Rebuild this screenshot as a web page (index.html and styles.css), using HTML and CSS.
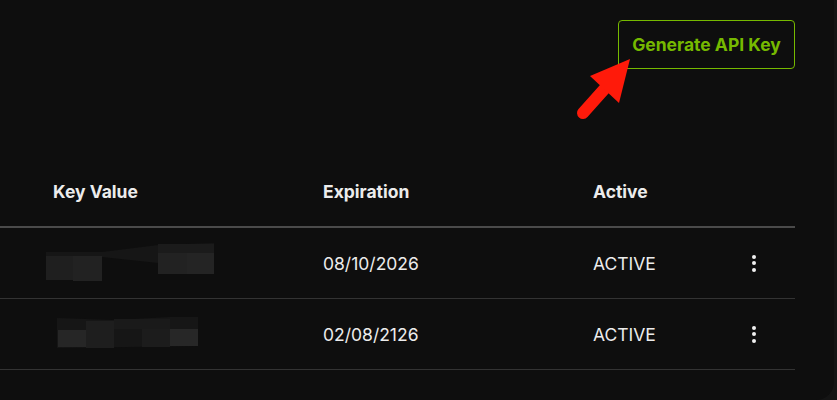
FILE: index.html
```html
<!DOCTYPE html>
<html>
<head>
<meta charset="utf-8">
<link rel="stylesheet" href="styles.css">
</head>
<body>
<div class="panel">
  <div class="toolbar">
    <button class="gen-btn">Generate API Key</button>
  </div>
  <div class="table">
    <div class="row head">
      <div class="cell first">Key Value</div>
      <div class="cell">Expiration</div>
      <div class="cell">Active</div>
      <div class="cell"></div>
    </div>
    <div class="row">
      <div class="cell first blur">
        <svg width="180" height="44" viewBox="46 240 180 44">
          <polygon points="46,251 102,251 158,244 214,242 214,257 158,262 102,256 46,256" fill="#161616"/>
          <rect x="46" y="255" width="27" height="24" fill="#1f1f1f"/>
          <rect x="73" y="255" width="29" height="25" fill="#222"/>
          <rect x="158" y="252" width="29" height="21" fill="#222"/>
          <rect x="187" y="252" width="27" height="21" fill="#242424"/>
          <rect x="158" y="243" width="56" height="9" fill="#1b1b1b"/>
        </svg>
      </div>
      <div class="cell">08/10/2026</div>
      <div class="cell">ACTIVE</div>
      <div class="cell"><span class="kebab"><i></i><i></i><i></i></span></div>
    </div>
    <div class="row">
      <div class="cell first blur">
        <svg width="180" height="44" viewBox="46 310 180 44">
          <polygon points="57,316 114,318 170,315 198,315 198,344 57,346" fill="#161616"/>
          <rect x="58" y="328" width="28" height="17" fill="#262626"/>
          <rect x="86" y="319" width="28" height="27" fill="#1e1e1e"/>
          <rect x="142" y="327" width="28" height="18" fill="#1c1c1c"/>
          <rect x="170" y="327" width="28" height="17" fill="#272727"/>
          <rect x="114" y="317" width="56" height="10" fill="#1a1a1a"/>
        </svg>
      </div>
      <div class="cell">02/08/2126</div>
      <div class="cell">ACTIVE</div>
      <div class="cell"><span class="kebab"><i></i><i></i><i></i></span></div>
    </div>
  </div>
  <svg class="arrow" width="70" height="70" viewBox="570 72 70 70">
    <line x1="583" y1="133" x2="608" y2="105" stroke="#ff1a0a" stroke-width="12" stroke-linecap="round"/>
    <polygon points="630,79 590,96 619,123" fill="#ff1a0a"/>
  </svg>
</div>
</body>
</html>
```

FILE: styles.css
```css
html, body {
  margin: 0;
  padding: 0;
  background: #141414;
}
body {
  width: 837px;
  height: 400px;
  overflow: hidden;
  font-family: Inter, "Noto Sans", sans-serif;
  color: #ececec;
}
.panel {
  position: relative;
  width: 834px;
  height: 420px;
  background: #0e0e0e;
  border-radius: 0 0 18px 0;
  margin-top: -20px;
  padding-top: 20px;
  box-sizing: border-box;
}
.toolbar {
  display: flex;
  justify-content: flex-end;
  padding: 20px 39px 0 0;
}
.gen-btn {
  height: 49px;
  width: 177px;
  background: transparent;
  border: 1px solid #76b900;
  border-radius: 4px;
  color: #76b900;
  font-family: Inter, "Noto Sans", sans-serif;
  font-weight: 700;
  font-size: 17.5px;
  padding: 0;
}
.table {
  width: 795px;
  margin-top: 84px;
}
.row {
  display: grid;
  grid-template-columns: 323px 270px 131px 1fr;
  height: 70px;
  align-items: center;
  border-bottom: 1px solid #333;
  font-size: 17.5px;
}
.row.head {
  height: 73px;
  font-weight: 700;
  border-bottom: 2px solid #4a4a4a;
  align-items: start;
}
.row.head .cell {
  padding-top: 28px;
}
.cell.first {
  padding-left: 53px;
}
.cell.blur {
  padding-left: 46px;
  display: flex;
}
.cell.blur svg {
  display: block;
}
.kebab {
  display: flex;
  flex-direction: column;
  gap: 2.5px;
  margin-left: 28px;
  width: 4px;
}
.kebab i {
  display: block;
  width: 4px;
  height: 4px;
  border-radius: 50%;
  background: #f0f0f0;
}
.arrow {
  position: absolute;
  left: 570px;
  top: 72px;
}
```
